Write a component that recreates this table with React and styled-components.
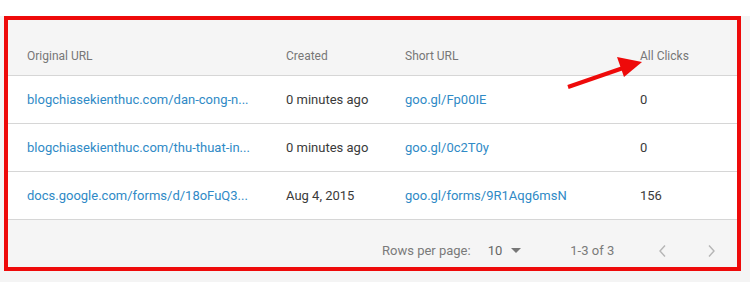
import React from "react";
import styled, { createGlobalStyle } from "styled-components";

const Global = createGlobalStyle`
  html, body { margin: 0; padding: 0; background: #ffffff; }
  body { font-family: Roboto, "Noto Sans", Arial, sans-serif; width: 750px; height: 282px; overflow: hidden; }
`;

const Surface = styled.div`
  position: relative;
  margin-top: 16px;
  height: 266px;
  background: #f4f4f4;
  padding-left: 4px;
  box-sizing: border-box;
`;

const Frame = styled.div`
  width: 737px;
  height: 255px;
  box-sizing: border-box;
  border: 4px solid #ee0a0a;
  background: #f5f5f5;
  display: flex;
  flex-direction: column;
`;

const Grid = styled.div`
  display: grid;
  grid-template-columns: 259px 119px 235px 1fr;
`;

const Row = styled(Grid)`
  height: ${(p) => p.$h}px;
  align-items: center;
  padding-left: 19px;
  background: ${(p) => (p.$head ? "#f5f5f5" : "#ffffff")};
  border-bottom: 1px solid #d6d6d6;
  box-sizing: border-box;
`;

const HeadCell = styled.div`
  font-size: 12px;
  color: #777777;
  padding-top: 16px;
`;

const Cell = styled.div`
  font-size: 13px;
  color: ${(p) => (p.$link ? "#2f8ac6" : "#3a3a3a")};
  white-space: nowrap;
`;

const Footer = styled.div`
  flex: 1;
  display: flex;
  align-items: center;
  padding-left: 374px;
  font-size: 13px;
  color: #7a7a7a;
  padding-top: 14px;
`;

const Rpp = styled.span``;

const Select = styled.span`
  display: inline-flex;
  align-items: center;
  gap: 9px;
  margin-left: 17px;
  color: #666;
`;

const Caret = styled.span`
  width: 0;
  height: 0;
  border-left: 5px solid transparent;
  border-right: 5px solid transparent;
  border-top: 5px solid #777;
`;

const Range = styled.span`
  margin-left: 49px;
`;

const Nav = styled.span`
  display: inline-flex;
  margin-left: 44px;
  gap: 38px;
`;

const Arrow = styled.svg`
  position: absolute;
  left: 560px;
  top: 20px;
`;

const rows = [
  ["blogchiasekienthuc.com/dan-cong-n...", "0 minutes ago", "goo.gl/Fp00IE", "0"],
  ["blogchiasekienthuc.com/thu-thuat-in...", "0 minutes ago", "goo.gl/0c2T0y", "0"],
  ["docs.google.com/forms/d/18oFuQ3...", "Aug 4, 2015", "goo.gl/forms/9R1Aqg6msN", "156"],
];

const Chev = ({ dir }) => (
  <svg width="10" height="14" viewBox="0 0 10 14">
    <path
      d={dir === "l" ? "M7 1.5 L2 7 L7 12.5" : "M3 1.5 L8 7 L3 12.5"}
      fill="none"
      stroke="#b5b5b5"
      strokeWidth="1.4"
    />
  </svg>
);

export default function App() {
  return (
    <>
      <Global />
      <Surface>
        <Frame>
          <Row $head $h={56}>
            <HeadCell>Original URL</HeadCell>
            <HeadCell>Created</HeadCell>
            <HeadCell>Short URL</HeadCell>
            <HeadCell>All Clicks</HeadCell>
          </Row>
          {rows.map((r, i) => (
            <Row key={i} $h={48}>
              <Cell $link>{r[0]}</Cell>
              <Cell>{r[1]}</Cell>
              <Cell $link>{r[2]}</Cell>
              <Cell>{r[3]}</Cell>
            </Row>
          ))}
          <Footer>
            <Rpp>Rows per page:</Rpp>
            <Select>
              10 <Caret />
            </Select>
            <Range>1-3 of 3</Range>
            <Nav>
              <Chev dir="l" />
              <Chev dir="r" />
            </Nav>
          </Footer>
        </Frame>
        <Arrow width="90" height="60" viewBox="0 0 90 60">
          <line x1="8" y1="51" x2="66" y2="31" stroke="#ee0a0a" strokeWidth="4" />
          <polygon points="82,26 57,21 64,41" fill="#ee0a0a" />
        </Arrow>
      </Surface>
    </>
  );
}
